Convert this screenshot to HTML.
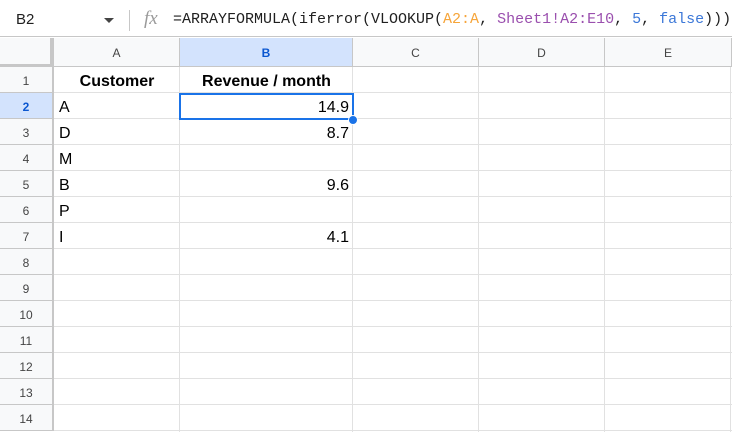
<!DOCTYPE html>
<html><head><style>
*{margin:0;padding:0;box-sizing:border-box}
body{width:732px;height:432px;overflow:hidden;background:#fff;font-family:"Liberation Sans",Arial,sans-serif;position:relative}
.a{position:absolute}
.hl{position:absolute;height:1px;background:#e1e1e1}
.vl{position:absolute;width:1px;background:#e1e1e1}
.ch{position:absolute;top:38px;height:29px;background:#f8f9fa;font-size:12px;color:#444;text-align:center;line-height:31px;border-right:1px solid #c7c7c7;border-bottom:1px solid #c7c7c7}
.rh{position:absolute;left:0;width:54px;height:26px;background:#f8f9fa;font-size:12px;color:#444;text-align:center;line-height:28px;border-right:2px solid #c7c7c7;border-bottom:1px solid #c7c7c7}
.t{position:absolute;font-size:16px;color:#000;line-height:29px;height:26px}
</style></head><body>
<div class="a" style="left:0;top:0;width:732px;height:37px;border-bottom:1px solid #c7c7c7;background:#fff"></div>
<div class="a" style="left:16px;top:11px;font-size:15px;color:#1f1f1f">B2</div>
<div class="a" style="left:104px;top:18px;width:0;height:0;border-left:5px solid transparent;border-right:5px solid transparent;border-top:5px solid #444"></div>
<div class="a" style="left:129px;top:10px;width:1px;height:21px;background:#c7c7c7"></div>
<div class="a" style="left:144px;top:8px;font-family:'Liberation Serif',serif;font-style:italic;font-size:19px;color:#9a9a9a">fx</div>
<div class="a" style="left:173px;top:11px;font-family:'Liberation Mono',monospace;font-size:15px;color:#1f1f1f;white-space:pre">=ARRAYFORMULA(iferror(VLOOKUP(<span style="color:#f6a53a">A2:A</span>, <span style="color:#9a4fae">Sheet1!A2:E10</span>, <span style="color:#3c78d8">5</span>, <span style="color:#3c78d8">false</span>)))</div>

<div class="ch" style="left:0;width:54px;border-right:4px solid #c7c7c7;border-bottom:3px solid #c7c7c7"></div>
<div class="ch" style="left:54px;width:126px">A</div>
<div class="ch" style="left:180px;width:173px;background:#d3e3fd;color:#0b57d0;font-weight:bold">B</div>
<div class="ch" style="left:353px;width:126px">C</div>
<div class="ch" style="left:479px;width:126px">D</div>
<div class="ch" style="left:605px;width:127px">E</div>

<div class="rh" style="top:67px">1</div>
<div class="rh" style="top:93px;background:#d3e3fd;color:#0b57d0;font-weight:bold">2</div>
<div class="rh" style="top:119px">3</div>
<div class="rh" style="top:145px">4</div>
<div class="rh" style="top:171px">5</div>
<div class="rh" style="top:197px">6</div>
<div class="rh" style="top:223px">7</div>
<div class="rh" style="top:249px">8</div>
<div class="rh" style="top:275px">9</div>
<div class="rh" style="top:301px">10</div>
<div class="rh" style="top:327px">11</div>
<div class="rh" style="top:353px">12</div>
<div class="rh" style="top:379px">13</div>
<div class="rh" style="top:405px">14</div>

<div class="hl" style="left:54px;width:678px;top:92px"></div>
<div class="hl" style="left:54px;width:678px;top:118px"></div>
<div class="hl" style="left:54px;width:678px;top:144px"></div>
<div class="hl" style="left:54px;width:678px;top:170px"></div>
<div class="hl" style="left:54px;width:678px;top:196px"></div>
<div class="hl" style="left:54px;width:678px;top:222px"></div>
<div class="hl" style="left:54px;width:678px;top:248px"></div>
<div class="hl" style="left:54px;width:678px;top:274px"></div>
<div class="hl" style="left:54px;width:678px;top:300px"></div>
<div class="hl" style="left:54px;width:678px;top:326px"></div>
<div class="hl" style="left:54px;width:678px;top:352px"></div>
<div class="hl" style="left:54px;width:678px;top:378px"></div>
<div class="hl" style="left:54px;width:678px;top:404px"></div>
<div class="hl" style="left:54px;width:678px;top:430px"></div>
<div class="vl" style="left:179px;top:67px;height:365px"></div>
<div class="vl" style="left:352px;top:67px;height:365px"></div>
<div class="vl" style="left:478px;top:67px;height:365px"></div>
<div class="vl" style="left:604px;top:67px;height:365px"></div>
<div class="vl" style="left:730px;top:67px;height:365px"></div>

<div class="t" style="left:54px;width:126px;top:67px;text-align:center;font-weight:bold">Customer</div>
<div class="t" style="left:180px;width:173px;top:67px;text-align:center;font-weight:bold">Revenue / month</div>
<div class="t" style="left:59px;top:93px">A</div>
<div class="t" style="left:59px;top:119px">D</div>
<div class="t" style="left:59px;top:145px">M</div>
<div class="t" style="left:59px;top:171px">B</div>
<div class="t" style="left:59px;top:197px">P</div>
<div class="t" style="left:59px;top:223px">I</div>
<div class="t" style="left:180px;width:169px;top:93px;text-align:right">14.9</div>
<div class="t" style="left:180px;width:169px;top:119px;text-align:right">8.7</div>
<div class="t" style="left:180px;width:169px;top:171px;text-align:right">9.6</div>
<div class="t" style="left:180px;width:169px;top:223px;text-align:right">4.1</div>

<div class="a" style="left:179px;top:93px;width:175px;height:27px;border:2px solid #1a73e8"></div>
<div class="a" style="left:348px;top:115px;width:10px;height:10px;border-radius:50%;background:#1a73e8;border:1px solid #fff"></div>
</body></html>
